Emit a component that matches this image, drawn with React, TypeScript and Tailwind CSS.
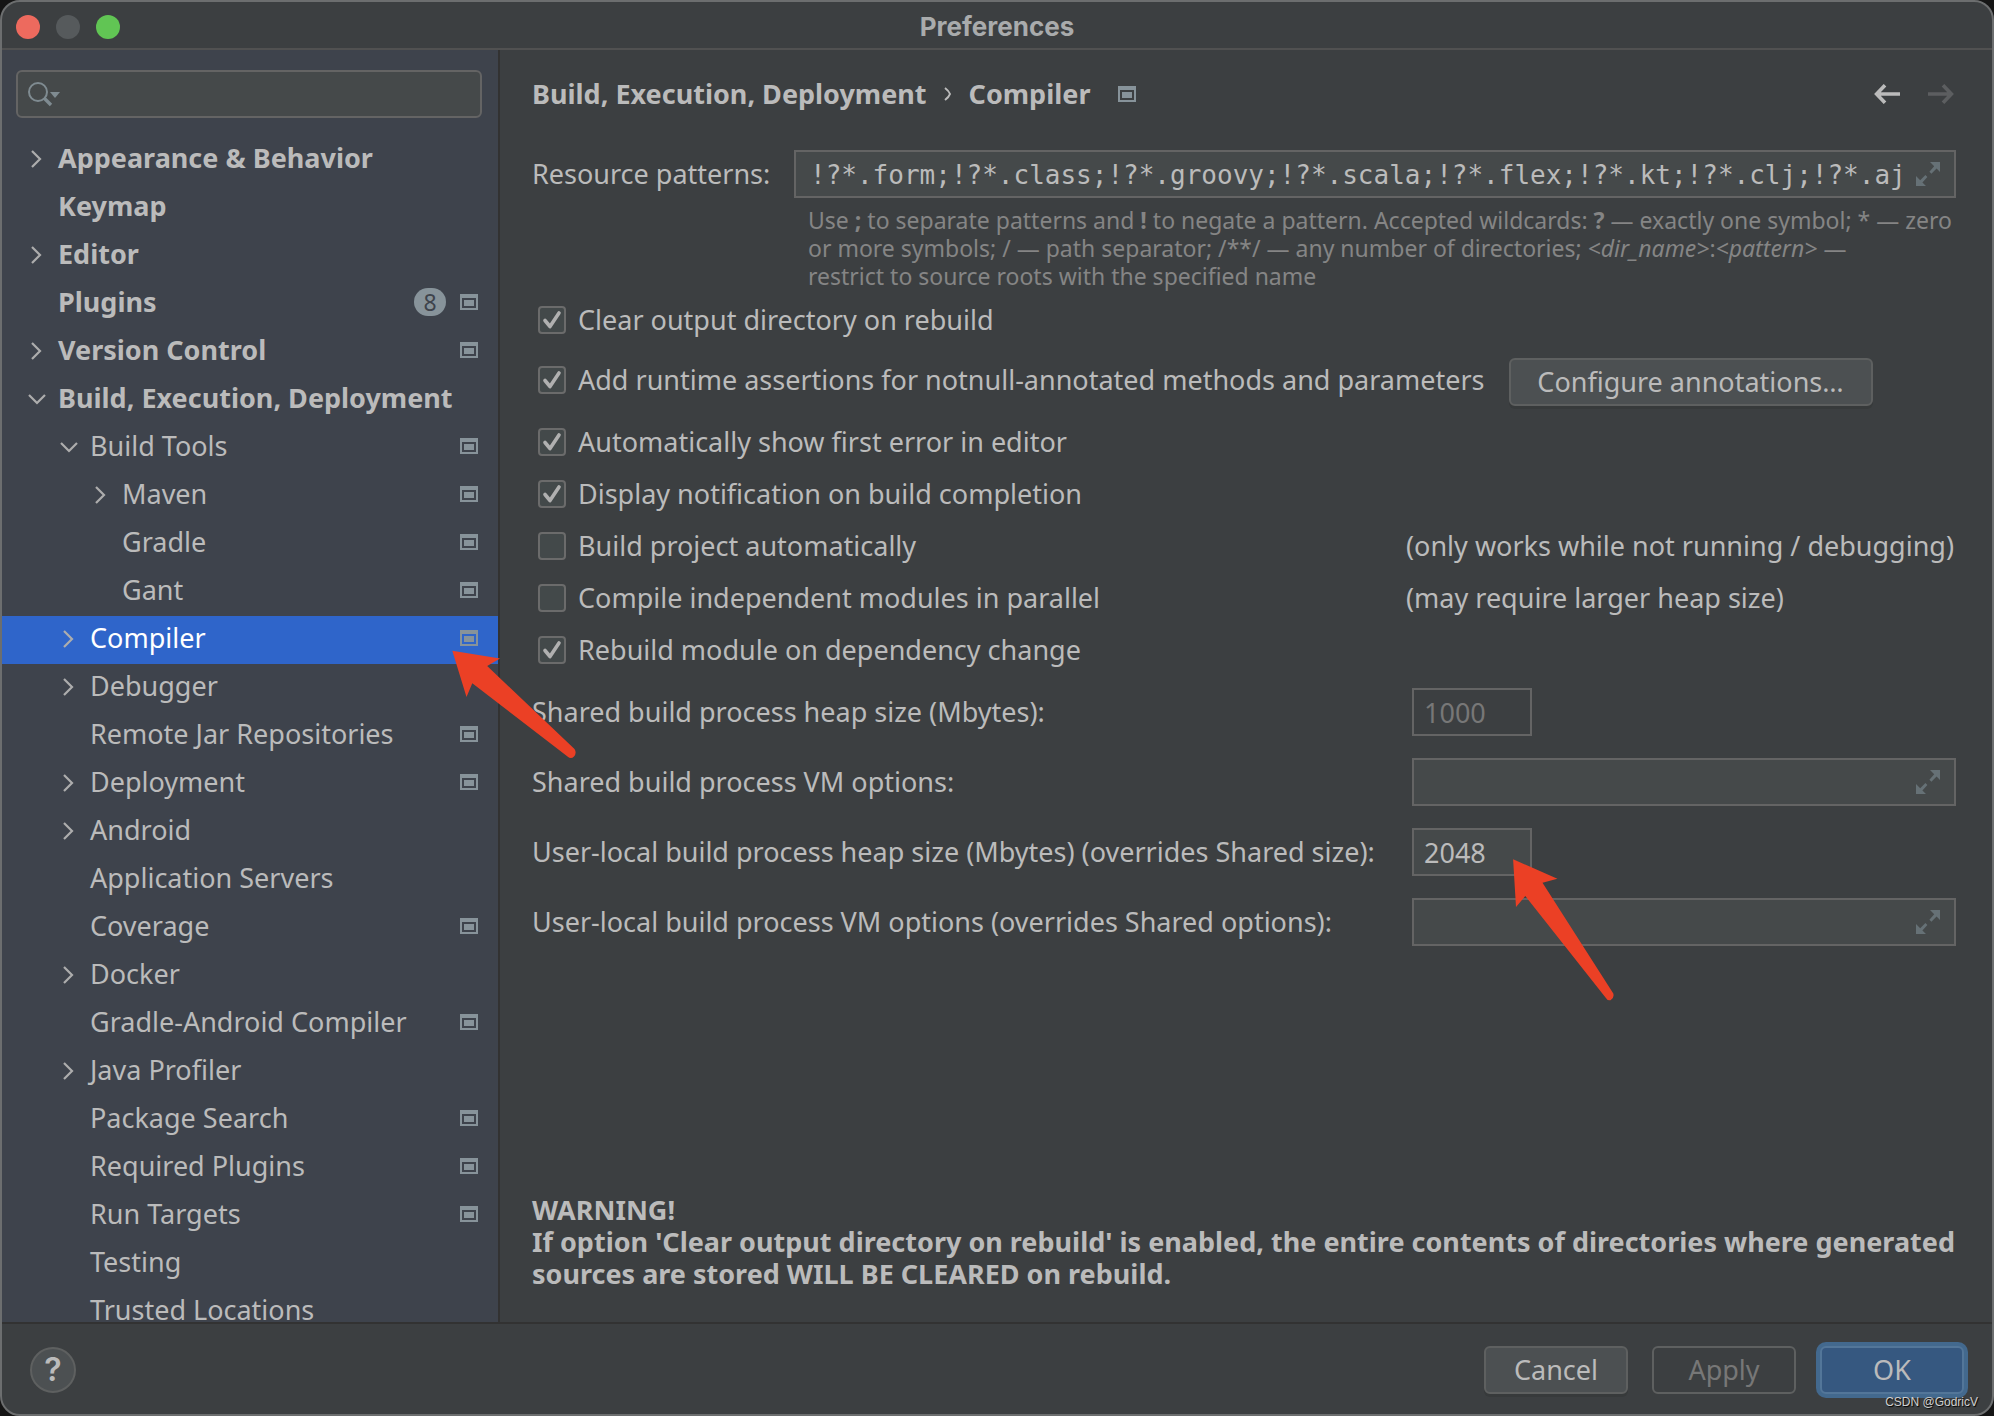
import React, { useState } from "react";
import clsx from "clsx";

type TreeItem = {
  label: string;
  level: 0 | 1 | 2;
  arrow?: "open" | "closed";
  badge?: number;
  project?: boolean; // setting is stored per project
};

const treeItems: TreeItem[] = [
  { label: "Appearance & Behavior", level: 0, arrow: "closed" },
  { label: "Keymap", level: 0 },
  { label: "Editor", level: 0, arrow: "closed" },
  { label: "Plugins", level: 0, badge: 8, project: true },
  { label: "Version Control", level: 0, arrow: "closed", project: true },
  { label: "Build, Execution, Deployment", level: 0, arrow: "open" },
  { label: "Build Tools", level: 1, arrow: "open", project: true },
  { label: "Maven", level: 2, arrow: "closed", project: true },
  { label: "Gradle", level: 2, project: true },
  { label: "Gant", level: 2, project: true },
  { label: "Compiler", level: 1, arrow: "closed", project: true },
  { label: "Debugger", level: 1, arrow: "closed" },
  { label: "Remote Jar Repositories", level: 1, project: true },
  { label: "Deployment", level: 1, arrow: "closed", project: true },
  { label: "Android", level: 1, arrow: "closed" },
  { label: "Application Servers", level: 1 },
  { label: "Coverage", level: 1, project: true },
  { label: "Docker", level: 1, arrow: "closed" },
  { label: "Gradle-Android Compiler", level: 1, project: true },
  { label: "Java Profiler", level: 1, arrow: "closed" },
  { label: "Package Search", level: 1, project: true },
  { label: "Required Plugins", level: 1, project: true },
  { label: "Run Targets", level: 1, project: true },
  { label: "Testing", level: 1 },
  { label: "Trusted Locations", level: 1 },
];

const indent = ["pl-6", "pl-14", "pl-22"];

const ProjectIcon = () => (
  <svg width="18" height="16" viewBox="0 0 18 16" className="shrink-0 fill-[#87939a]">
    <path fillRule="evenodd" d="M0 0H18V16H0ZM2 4V14H16V4Z" />
    <path d="M4 6H14V12H4Z" />
  </svg>
);

const TreeArrow = ({ open }: { open: boolean }) => (
  <svg width="24" height="24" viewBox="0 0 24 24" fill="none" stroke="#adadad" strokeWidth="2.2">
    <path d={open ? "M3 9L11 17L19 9" : "M6 5L14 13L6 21"} />
  </svg>
);

const ExpandIcon = () => (
  <svg width="24" height="24" viewBox="0 0 24 24" className="shrink-0 fill-[#667176]">
    <path d="M14 0H24V10L20.600 6.600L15.400 11.800L13.400 9.800L18.200 4.200Z" />
    <path d="M0 14V24H10L6.400 20.600L11.400 15L9.400 13L4.200 18.200Z" />
  </svg>
);

const Tree = () => {
  const [selected, setSelected] = useState("Compiler");

  return (
    <ul className="min-h-0 flex-1 overflow-hidden">
      {treeItems.map((item) => (
        <li key={item.label}>
          <button
            type="button"
            onClick={() => setSelected(item.label)}
            className={clsx(
              "flex h-12 w-full items-center pr-5 pb-1 text-left whitespace-nowrap",
              indent[item.level],
              item.level === 0 && "font-bold",
              item.label === selected ? "bg-[#2f65ca] text-white" : "text-[#bbbbbb]"
            )}
          >
            <span className="mr-2 w-6 shrink-0">
              {item.arrow && <TreeArrow open={item.arrow === "open"} />}
            </span>
            <span className="flex-1">{item.label}</span>
            {item.badge && (
              <span className="mr-3.5 flex h-7 w-8 items-center justify-center rounded-full bg-[#87939a] text-[23px] font-normal text-[#3e434c]">
                {item.badge}
              </span>
            )}
            {item.project && <ProjectIcon />}
          </button>
        </li>
      ))}
    </ul>
  );
};

const CheckBox = ({ label, checked }: { label: string; checked?: boolean }) => (
  <label className="flex h-7 items-center gap-3 pl-1.5 whitespace-nowrap">
    <span className="grid size-7 shrink-0">
      <input
        type="checkbox"
        defaultChecked={checked}
        className="peer col-start-1 row-start-1 size-7 appearance-none rounded-[4px] border-2 border-[#6b6b6b] bg-[#43494a]"
      />
      <svg
        viewBox="0 0 28 28"
        fill="none"
        stroke="#b0b0b0"
        strokeWidth="3.6"
        className="pointer-events-none invisible col-start-1 row-start-1 size-7 peer-checked:visible"
      >
        <path d="M7 14.500L12 20.500L21 7" strokeLinecap="round" strokeLinejoin="round" />
      </svg>
    </span>
    {label}
  </label>
);

const fieldBox = "flex h-12 items-center border-2 border-[#646464] bg-[#45494a]";

const WideField = ({ id }: { id: string }) => (
  <div className={clsx(fieldBox, "pl-2 pr-3.5")}>
    <input id={id} type="text" className="min-w-0 flex-1 bg-transparent outline-none" />
    <ExpandIcon />
  </div>
);

const dialogButton = "h-12 rounded-md border-2";

const App = () => {
  return (
    <div className="h-screen bg-[#151515] font-['Noto_Sans','Open_Sans',sans-serif] text-[27px] leading-8 text-[#bbbbbb]">
      <div className="relative flex h-full flex-col overflow-hidden rounded-[20px] border-2 border-[#6c6e6f] bg-[#3c3f41]">
        {/* Title bar */}
        <header className="grid h-12 shrink-0 grid-cols-[1fr_auto_1fr] items-center border-b-2 border-[#515151] px-3.5 pt-1">
          <div className="flex gap-4">
            <button type="button" aria-label="Close" className="size-6 rounded-full bg-[#ed6a5e]" />
            <button type="button" aria-label="Minimize" className="size-6 rounded-full bg-[#565a5c]" />
            <button type="button" aria-label="Zoom" className="size-6 rounded-full bg-[#61c554]" />
          </div>
          <h1 className="font-['Inter',sans-serif] text-[26px] font-bold text-[#a9abac]">Preferences</h1>
        </header>

        <div className="flex min-h-0 flex-1">
          {/* Sidebar */}
          <nav className="flex w-[498px] shrink-0 flex-col border-r-2 border-[#323232] bg-[#3e434c]">
            <div className="mt-5 mr-4 mb-[18px] ml-3.5 flex h-12 shrink-0 items-center rounded-md border-2 border-[#646464] bg-[#45494a] pl-2">
              <svg width="36" height="28" viewBox="0 0 36 28" fill="none" stroke="#7f8b91" className="shrink-0">
                <circle cx="12" cy="12" r="9" strokeWidth="2" />
                <path d="M18.500 18.500L25 25" strokeWidth="3.4" />
                <path d="M24 12H34L29 18Z" fill="#7f8b91" stroke="none" />
              </svg>
              <input type="search" aria-label="Search settings" className="min-w-0 flex-1 bg-transparent outline-none" />
            </div>
            <Tree />
          </nav>

          {/* Settings page */}
          <main className="flex min-w-0 flex-1 flex-col pr-9 pb-8 pl-8">
            <div className="flex h-[88px] shrink-0 items-center">
              <h2 className="flex items-center font-bold">
                Build, Execution, Deployment
                <svg width="8" height="16" viewBox="0 0 8 16" fill="none" stroke="#bbbbbb" strokeWidth="2" className="mx-[17px]">
                  <path d="M1 2Q5 5 6 8Q5 11 1 14" />
                </svg>
                Compiler
              </h2>
              <span className="ml-7">
                <ProjectIcon />
              </span>
              <div className="mr-0.5 ml-auto flex gap-7">
                <button type="button" aria-label="Back">
                  <svg width="26" height="20" viewBox="0 0 26 20" fill="none" stroke="#bbbbbb" strokeWidth="3.6">
                    <path d="M26 10H3M11 1.200L2.600 10L11 18.800" />
                  </svg>
                </button>
                <button type="button" aria-label="Forward" disabled>
                  <svg width="26" height="20" viewBox="0 0 26 20" fill="none" stroke="#5c5e60" strokeWidth="3.6">
                    <path d="M0 10H23M15 1.200L23.400 10L15 18.800" />
                  </svg>
                </button>
              </div>
            </div>

            <div className="mt-3 grid grid-cols-[262px_1fr]">
              <label htmlFor="patterns" className="self-center">
                Resource patterns:
              </label>
              <div className={clsx(fieldBox, "pr-3.5 pl-3.5")}>
                <input
                  id="patterns"
                  type="text"
                  defaultValue="!?*.form;!?*.class;!?*.groovy;!?*.scala;!?*.flex;!?*.kt;!?*.clj;!?*.aj"
                  className="min-w-0 flex-1 bg-transparent pt-0.5 font-['DejaVu_Sans_Mono',monospace] text-[26px] outline-none"
                />
                <ExpandIcon />
              </div>
              <p className="col-start-2 mt-2 pl-3.5 text-[23px] leading-7 whitespace-nowrap text-[#858585]">
                Use <b>;</b> to separate patterns and <b>!</b> to negate a pattern. Accepted wildcards: <b>?</b> — exactly
                one symbol; * — zero
                <br />
                or more symbols; / — path separator; /**/ — any number of directories; <i>&lt;dir_name&gt;</i>:
                <i>&lt;pattern&gt;</i> —
                <br />
                restrict to source roots with the specified name
              </p>
            </div>

            <div className="mt-4 flex flex-col">
              <CheckBox label="Clear output directory on rebuild" checked />
              <div className="mt-6 mb-[22px] flex items-start gap-6">
                <div className="pt-2">
                  <CheckBox label="Add runtime assertions for notnull-annotated methods and parameters" checked />
                </div>
                <button
                  type="button"
                  className={clsx(dialogButton, "w-[364px] border-[#5e6060] bg-[#4c5052] shadow-[0_3px_0_#373a3b]")}
                >
                  Configure annotations…
                </button>
              </div>
              <div className="grid grid-cols-[874px_1fr] gap-y-6 whitespace-nowrap">
                <div className="col-span-2">
                  <CheckBox label="Automatically show first error in editor" checked />
                </div>
                <div className="col-span-2">
                  <CheckBox label="Display notification on build completion" checked />
                </div>
                <CheckBox label="Build project automatically" />
                <span className="leading-7">(only works while not running / debugging)</span>
                <CheckBox label="Compile independent modules in parallel" />
                <span className="leading-7">(may require larger heap size)</span>
                <div className="col-span-2">
                  <CheckBox label="Rebuild module on dependency change" checked />
                </div>
              </div>
            </div>

            <div className="mt-6 grid grid-cols-[880px_1fr] items-center gap-y-[22px]">
              <label htmlFor="shared-heap">Shared build process heap size (Mbytes):</label>
              <input
                id="shared-heap"
                type="text"
                disabled
                defaultValue="1000"
                className="h-12 w-30 border-2 border-[#646464] px-2.5 text-[#777777]"
              />
              <label htmlFor="shared-vm">Shared build process VM options:</label>
              <WideField id="shared-vm" />
              <label htmlFor="local-heap">User-local build process heap size (Mbytes) (overrides Shared size):</label>
              <div className="relative">
                <input
                  id="local-heap"
                  type="text"
                  defaultValue="2048"
                  className="block h-12 w-30 border-2 border-[#646464] bg-[#45494a] px-2.5 outline-none"
                />
                <svg
                  width="104"
                  height="144"
                  viewBox="0 0 104 144"
                  className="pointer-events-none absolute top-[30px] left-[100px] z-10 fill-[#eb4025]"
                >
                  <path d="M1.100 1.300L45.400 20.700L30.500 24.700L101.300 135.500Q102.500 140 98.500 142.200Q95.500 143 93.500 139.500L13.300 38L4 49Z" />
                </svg>
              </div>
              <label htmlFor="local-vm">User-local build process VM options (overrides Shared options):</label>
              <WideField id="local-vm" />
            </div>

            <p className="mt-auto font-bold">
              WARNING!
              <br />
              If option 'Clear output directory on rebuild' is enabled, the entire contents of directories where generated
              sources are stored WILL BE CLEARED on rebuild.
            </p>
          </main>
        </div>

        {/* Buttons */}
        <footer className="flex h-[92px] shrink-0 items-center border-t-2 border-[#323232] px-7 pt-0.5">
          <button
            type="button"
            aria-label="Help"
            className="size-[46px] rounded-full border-2 border-[#5e6060] bg-[#4c5052] font-['Inter',sans-serif] text-[32px] font-semibold"
          >
            ?
          </button>
          <div className="ml-auto flex gap-6">
            <button type="button" className={clsx(dialogButton, "w-36 border-[#5e6060] bg-[#4c5052] shadow-[0_3px_0_#373a3b]")}>
              Cancel
            </button>
            <button type="button" disabled className={clsx(dialogButton, "w-36 border-[#5e6060] text-[#777777]")}>
              Apply
            </button>
            <button type="button" className={clsx(dialogButton, "w-36 border-[#537699] bg-[#365880] shadow-[0_0_0_4px_#43698e]")}>
              OK
            </button>
          </div>
        </footer>

        {/* Pointer to the selected tree row */}
        <svg
          width="126"
          height="110"
          viewBox="0 0 126 110"
          className="pointer-events-none absolute top-[648px] left-[450px] z-10 fill-[#eb4025]"
        >
          <path d="M0.300 0.700L48 8.500L35.200 16L122.500 99Q125 103 122 106.500Q119 109.500 115.500 106.500L20.300 33.300L14.500 47Z" />
        </svg>

        <span className="absolute right-3.5 bottom-1 font-['Liberation_Sans',sans-serif] text-xs leading-4 text-[#d0d0d0] [text-shadow:1px_1px_1px_#000]">
          CSDN @GodricV
        </span>
      </div>
    </div>
  );
};

export default App;
